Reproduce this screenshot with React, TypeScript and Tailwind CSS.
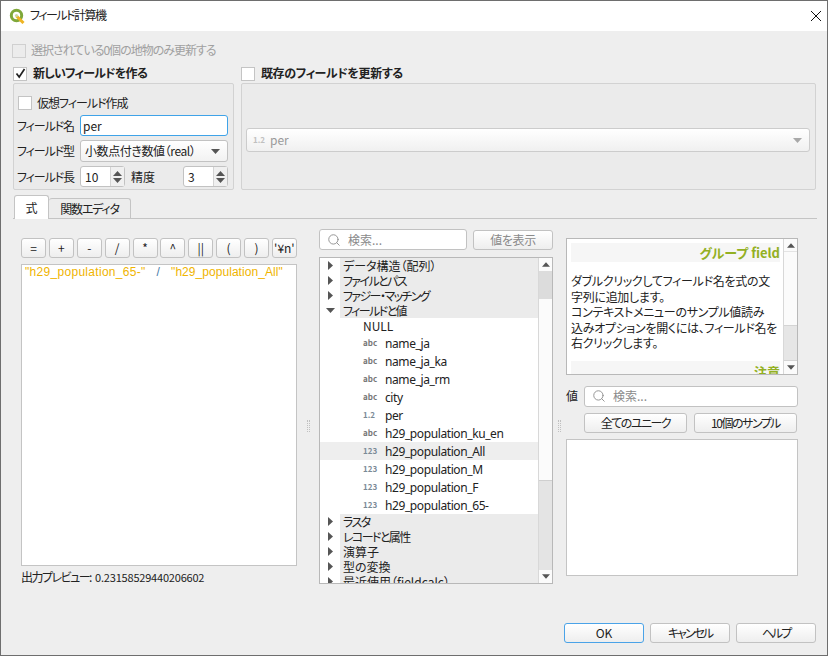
import { Search } from 'lucide-react';
import type { ReactNode } from 'react';

const jp = "font-['Noto_Sans_CJK_JP','Noto_Sans',sans-serif] [font-feature-settings:'palt']";

function Check({ checked, disabled }: { checked?: boolean; disabled?: boolean }) {
  return (
    <span className={`flex w-[14px] h-[14px] shrink-0 items-center justify-center border ${disabled ? 'border-[#d0d0d0] bg-[#ececec]' : 'border-[#c4c4c4] bg-white'}`}>
      {checked && (
        <svg width="11" height="11" viewBox="0 0 11 11" fill="none">
          <path d="M1.5 5.5L4.2 9L9.5 1" stroke="#222" strokeWidth="1.7" />
        </svg>
      )}
    </span>
  );
}

function Btn({ children, className = '', primary }: { children: ReactNode; className?: string; primary?: boolean }) {
  return (
    <button className={`flex items-center justify-center rounded-[3px] border bg-linear-to-b from-white to-[#eeeeee] text-[12px] leading-none ${primary ? 'border-[#4aa3e8]' : 'border-[#c2c2c2]'} ${className}`}>
      {children}
    </button>
  );
}

function Tri({ up, color = '#555', w = 9 }: { up?: boolean; color?: string; w?: number }) {
  return (
    <svg width={w} height={5} viewBox="0 0 9 5">
      <path d={up ? 'M4.5 0L9 5H0z' : 'M0 0H9L4.5 5z'} fill={color} />
    </svg>
  );
}

function Spin({ value, className = '' }: { value: string; className?: string }) {
  return (
    <div className={`flex h-[21px] shrink-0 rounded-[3px] border border-[#c2c2c2] bg-white ${className}`}>
      <span className="flex-1 pl-[4px] text-[12px] leading-[19px]">{value}</span>
      <span className="flex w-[14px] flex-col items-center justify-center gap-[2px] border-l border-[#d4d4d4] bg-[#f0f0f0]">
        <Tri up />
        <Tri />
      </span>
    </div>
  );
}

function SearchBox({ className = '' }: { className?: string }) {
  return (
    <div className={`flex items-center rounded-[3px] border border-[#c2c2c2] bg-white pl-[7px] ${className}`}>
      <Search size={14} color="#8f8f8f" strokeWidth={1.6} />
      <span className="ml-[7px] text-[12px] text-[#8a8a8a]">検索...</span>
    </div>
  );
}

function Arrow({ open }: { open?: boolean }) {
  return (
    <span className="flex w-[20px] shrink-0 items-center justify-center">
      {open ? (
        <svg width="9" height="5" viewBox="0 0 9 5"><path d="M0 0H9L4.5 5z" fill="#555" /></svg>
      ) : (
        <svg width="5" height="9" viewBox="0 0 5 9"><path d="M0 0L5 4.5L0 9z" fill="#555" /></svg>
      )}
    </span>
  );
}

function Group({ label, open, tight }: { label: string; open?: boolean; tight?: boolean }) {
  return (
    <div className="flex h-[15px] shrink-0">
      <Arrow open={open} />
      <span className={`flex-1 overflow-hidden bg-[#ebebeb] pl-[3px] text-[12px] leading-[15px] ${tight ? 'tracking-[-1.6px]' : ''}`}>{label}</span>
    </div>
  );
}

const fields = [
  { type: 'abc', name: 'name_ja' },
  { type: 'abc', name: 'name_ja_ka' },
  { type: 'abc', name: 'name_ja_rm' },
  { type: 'abc', name: 'city' },
  { type: '1.2', name: 'per' },
  { type: 'abc', name: 'h29_population_ku_en' },
  { type: '123', name: 'h29_population_All', active: true },
  { type: '123', name: 'h29_population_M' },
  { type: '123', name: 'h29_population_F' },
  { type: '123', name: 'h29_population_65-' },
];

function QgisLogo() {
  return (
    <svg width="16" height="16" viewBox="0 0 16 16" fill="none">
      <circle cx="7.5" cy="7.5" r="5.2" stroke="#7fa83a" strokeWidth="3" />
      <path d="M7.5 8L14.5 15" stroke="#eeb422" strokeWidth="3" />
      <circle cx="7.5" cy="7.5" r="1.6" fill="#c9d8a0" />
    </svg>
  );
}

export default function App() {
  return (
    <div className={`flex h-[656px] w-[828px] flex-col overflow-hidden whitespace-nowrap border border-[#6e6e6e] bg-[#eeeeee] text-[12px] text-[#222] ${jp}`}>
      <div className="flex h-[30px] shrink-0 items-center bg-white pl-[8px] pr-[5px]">
        <QgisLogo />
        <span className="ml-[5px] flex-1 pb-[2px] text-[12px] tracking-[-1.5px]">フィールド計算機</span>
        <svg width="12" height="12" viewBox="0 0 12 12" fill="none">
          <path d="M1 1L11 11M11 1L1 11" stroke="#111" strokeWidth="1" />
        </svg>
      </div>

      <div className="flex flex-1 flex-col pl-[12px] pr-[10px]">
        <label className="mt-[13px] flex h-[14px] items-center">
          <span className="-ml-px"><Check disabled /></span>
          <span className="ml-[5px] pb-[2px] tracking-[-1px] text-[#a0a0a0]">選択されている0個の地物のみ更新する</span>
        </label>

        <div className="mt-[8px] flex h-[15px] items-center">
          <div className="flex w-[228px] items-center">
            <Check checked />
            <span className="ml-[6px] pb-[2px] font-bold tracking-[-0.8px]">新しいフィールドを作る</span>
          </div>
          <Check />
          <span className="ml-[6px] pb-[2px] font-bold tracking-[-0.4px]">既存のフィールドを更新する</span>
        </div>

        <div className="mt-[2px] flex h-[107px] shrink-0 gap-[7px]">
          <div className="flex w-[221px] flex-col rounded-[2px] border border-[#d2d2d2] bg-[#ebebeb] px-[3px]">
            <div className="mt-[12px] flex h-[14px] items-center pl-[1px]">
              <Check />
              <span className="ml-[5px] tracking-[-1px]">仮想フィールド作成</span>
            </div>
            <div className="mt-[5px] flex items-center">
              <span className="w-[63px] shrink-0 tracking-[-1.1px]">フィールド名</span>
              <div className="h-[21px] w-[148px] rounded-[3px] border border-[#3fa3e8] bg-white pl-[2px] leading-[19px]">per</div>
            </div>
            <div className="mt-[4px] flex items-center">
              <span className="w-[63px] shrink-0 tracking-[-1.1px]">フィールド型</span>
              <div className="flex h-[22px] w-[148px] items-center justify-between rounded-[3px] border border-[#c2c2c2] bg-linear-to-b from-white to-[#f2f2f2] pl-[4px] pr-[7px]">
                <span className="tracking-[-0.4px]">小数点付き数値（real）</span>
                <Tri />
              </div>
            </div>
            <div className="mt-[4px] flex items-center">
              <span className="w-[63px] shrink-0 tracking-[-1.1px]">フィールド長</span>
              <Spin value="10" className="w-[45px]" />
              <span className="ml-[6px] w-[52px] shrink-0">精度</span>
              <Spin value="3" className="w-[45px]" />
            </div>
          </div>

          <div className="flex w-[575px] items-center rounded-[2px] border border-[#d2d2d2] bg-[#ebebeb] pl-[4px] pr-[5px]">
            <div className="mt-[7px] flex h-[24px] flex-1 items-center justify-between rounded-[3px] border border-[#cccccc] bg-linear-to-b from-white to-[#f0f0f0] pl-[6px] pr-[7px]">
              <span className="flex items-center text-[#9a9a9a]">
                <span className="w-[17px] text-[8px] font-bold text-[#c0c0c0]">1.2</span>
                per
              </span>
              <Tri color="#a8a8a8" />
            </div>
          </div>
        </div>

        <div className="mt-[6px] flex h-[23px] shrink-0 items-end border-b border-[#c4c4c4]">
          <div className="relative z-10 -mb-px ml-px flex h-[24px] w-[35px] items-center justify-center rounded-t-[3px] border border-b-0 border-[#c4c4c4] bg-white">式</div>
          <div className="flex h-[20px] w-[82px] items-center justify-center rounded-t-[3px] border border-l-0 border-b-0 border-[#c4c4c4] bg-[#ececec] tracking-[-1.2px]">関数エディタ</div>
        </div>

        <div className="flex flex-1">
          <div className="ml-[8px] mt-[19px] flex w-[276px] flex-col">
            <div className="flex h-[20px] justify-between">
              {['=', '+', '-', '/', '*', '^', '||', '(', ')', "'¥n'"].map((op) => (
                <Btn key={op} className="w-[25px]">{op}</Btn>
              ))}
            </div>
            <div className="mt-[6px] h-[302px] border border-[#c4c4c4] bg-white pl-[3px] text-[12px] leading-[14px] tracking-[0.3px] whitespace-pre text-[#f0b400] font-['Liberation_Sans',sans-serif]">
              {'"h29_population_65-"   '}<span className="text-[#4a7ba8]">/</span>{'   '}<span className="tracking-[0.05px]">"h29_population_All"</span>
            </div>
            <div className="mt-[4px] h-[14px] leading-[14px] tracking-[-1.5px]">出力プレビュー: <span className="ml-[3px] text-[11px] tracking-[-0.2px]">0.23158529440206602</span></div>
          </div>

          <div className="flex w-[22px] items-center justify-center pt-[10px]">
            <span className="h-[12px] w-[3px] border-x border-dotted border-[#c0c0c0]" />
          </div>

          <div className="mt-[10px] flex w-[234px] flex-col">
            <div className="flex h-[21px] items-center justify-between">
              <SearchBox className="h-[21px] w-[148px]" />
              <Btn className="h-[20px] w-[80px] tracking-[-0.4px] text-[#8a8a8a]">値を表示</Btn>
            </div>
            <div className="mt-[7px] flex h-[327px] overflow-hidden border border-[#b8b8b8] bg-white">
              <div className="flex flex-1 flex-col overflow-hidden">
                <Group label="データ構造（配列）" />
                <Group label="ファイルとパス" tight />
                <Group label="ファジー・マッチング" tight />
                <Group label="フィールドと値" open tight />
                <div className="h-[16px] shrink-0 pl-[43px] leading-[16px]">NULL</div>
                {fields.map((f) => (
                  <div key={f.name} className={`flex h-[18px] shrink-0 items-center pl-[43px] ${f.active ? 'bg-[#eeeeee]' : ''}`}>
                    <span className={`w-[22px] text-[8px] font-bold ${f.type === 'abc' ? 'text-[#777]' : 'text-[#7b8a96]'}`}>{f.type}</span>
                    <span className="pt-[2px] tracking-[-0.4px] font-['Noto_Sans',sans-serif]">{f.name}</span>
                  </div>
                ))}
                <Group label="ラスタ" tight />
                <Group label="レコードと属性" tight />
                <Group label="演算子" />
                <Group label="型の変換" />
                <Group label="最近使用（fieldcalc）" />
              </div>
              <div className="flex w-[14px] flex-col border-l border-[#d8d8d8] bg-[#fbfbfb]">
                <div className="flex h-[13px] shrink-0 items-center justify-center"><Tri up w={8} /></div>
                <div className="h-[28px] shrink-0 bg-[#dcdcdc]" />
                <div className="flex-1" />
                <div className="h-[90px] shrink-0 border-t border-[#cfcfcf] bg-[#e4e4e4]" />
                <div className="flex h-[13px] shrink-0 items-center justify-center"><Tri w={8} /></div>
              </div>
            </div>
          </div>

          <div className="flex w-[13px] items-center justify-center pt-[10px]">
            <span className="h-[12px] w-[3px] border-x border-dotted border-[#c0c0c0]" />
          </div>

          <div className="mt-[19px] flex w-[232px] flex-col">
            <div className="flex h-[137px] overflow-hidden border border-[#b8b8b8] bg-white">
              <div className="flex flex-1 flex-col overflow-hidden pl-[4px] pr-[3px] pt-[4px]">
                <div className="h-[19px] shrink-0 bg-[#f6f6f6] text-right text-[13px] font-bold leading-[19px] text-[#93b023]">グループ field</div>
                <div className="mt-[11px] h-[78px] shrink-0 text-[12px] leading-[15.5px] tracking-[-0.3px]">
                  <div>ダブルクリックしてフィールド名を式の文</div>
                  <div>字列に追加します。</div>
                  <div>コンテキストメニューのサンプル値読み</div>
                  <div>込みオプションを開くには、フィールド名を</div>
                  <div>右クリックします。</div>
                </div>
                <div className="mt-[10px] h-[20px] shrink-0 bg-[#f6f6f6] pt-[1px] text-right text-[13px] font-bold leading-[19px] text-[#93b023]">注意</div>
              </div>
              <div className="flex w-[14px] flex-col border-l border-[#d8d8d8] bg-[#fbfbfb]">
                <div className="flex h-[13px] shrink-0 items-center justify-center border-b border-[#e4e4e4]"><Tri up w={8} /></div>
                <div className="flex-1" />
                <div className="h-[36px] shrink-0 border-y border-[#d4d4d4] bg-[#e6e6e6]" />
                <div className="flex h-[13px] shrink-0 items-center justify-center"><Tri w={8} /></div>
              </div>
            </div>
            <div className="mt-[10px] flex h-[22px] items-center">
              <span className="w-[18px]">値</span>
              <SearchBox className="h-[21px] flex-1" />
            </div>
            <div className="ml-[18px] mt-[6px] flex h-[20px] gap-[7px]">
              <Btn className="w-[103px] tracking-[-1.5px]">全てのユニーク</Btn>
              <Btn className="w-[103px] tracking-[-1.5px]">10個のサンプル</Btn>
            </div>
            <div className="mt-[6px] h-[137px] border border-[#c4c4c4] bg-white" />
          </div>
        </div>

        <div className="mb-[12px] mr-[1px] flex justify-end gap-[6px]">
          <Btn primary className="h-[20px] w-[80px]">OK</Btn>
          <Btn className="h-[20px] w-[80px] tracking-[-2px]">キャンセル</Btn>
          <Btn className="h-[20px] w-[80px] tracking-[-2px]">ヘルプ</Btn>
        </div>
      </div>
    </div>
  );
}
